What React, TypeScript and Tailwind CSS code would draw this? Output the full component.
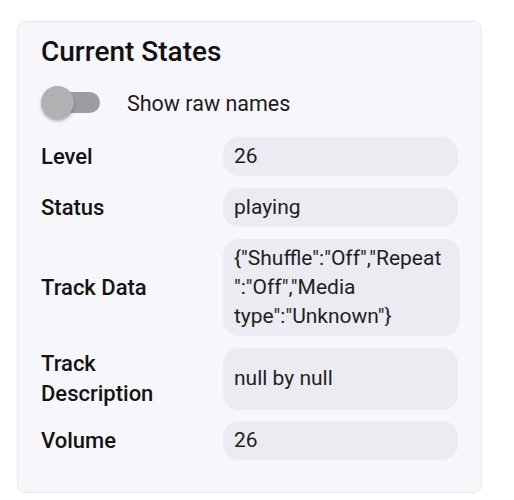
const rows: { label: string; value: string }[] = [
  { label: "Level", value: "26" },
  { label: "Status", value: "playing" },
  { label: "Track Data", value: '{"Shuffle":"Off","Repeat":"Off","Media type":"Unknown"}' },
  { label: "Track Description", value: "null by null" },
  { label: "Volume", value: "26" },
];

export default function App() {
  return (
    <div className="w-[514px] h-[500px] bg-white pt-[21px] pl-[17px] font-['Roboto',sans-serif]">
      <div className="w-[465px] h-[472px] bg-[#f7f7fb] border border-[#e8e8ed] rounded-[8px] pt-[14px] px-[23px]">
        <h2 className="text-[28px] leading-[32px] font-medium text-[#111111]">Current States</h2>

        <div className="mt-[18px] flex items-center h-[34px]">
          <div className="relative w-[60px] h-[34px] shrink-0">
            <div className="absolute left-[3px] top-[6px] w-[56px] h-[21px] rounded-full bg-[#9c9ca2]"></div>
            <div className="absolute left-0 top-0 w-[33px] h-[33px] rounded-full bg-[#b1b1b3] shadow-[0_2px_3px_rgba(0,0,0,0.3)]"></div>
          </div>
          <span className="ml-[26px] text-[21.5px] leading-[29px] text-[#1c1c1e]">Show raw names</span>
        </div>

        <div className="mt-[17px] flex flex-col gap-[11.5px]">
          {rows.map((r) => (
            <div key={r.label} className="flex">
              <div className="w-[182px] shrink-0 self-center pr-4 py-[1.5px] text-[22px] leading-[29.3px] font-medium text-[#141414]">
                {r.label}
              </div>
              <div className="w-[237px] flex items-center rounded-[16px] bg-[#ebebf2] pl-[11px] pr-[14px] py-[5px] text-[21px] leading-[29.3px] text-[#1f1f22]">
                <span className="min-w-0 break-words">{r.value}</span>
              </div>
            </div>
          ))}
        </div>
      </div>
    </div>
  );
}
